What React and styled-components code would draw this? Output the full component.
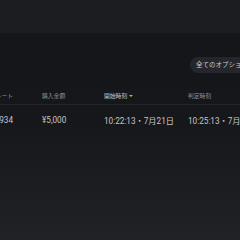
import styled, { createGlobalStyle } from "styled-components";

const GlobalStyle = createGlobalStyle`
  html, body {
    margin: 0;
    padding: 0;
    background: #141519;
  }
  body {
    font-family: Roboto, "Noto Sans CJK JP", sans-serif;
  }
`;

const Page = styled.div`
  width: 240px;
  height: 240px;
  overflow: hidden;
  display: flex;
  flex-direction: column;
  background: linear-gradient(180deg, #141519 0%, #16171b 50%, #202226 100%);
`;

const TopBar = styled.div`
  height: 33px;
  flex-shrink: 0;
  background: #1c1d21;
`;

const Toolbar = styled.div`
  display: flex;
  justify-content: flex-end;
  padding-top: 24px;
  height: 16px;
`;

const FilterPill = styled.div`
  flex-shrink: 0;
  width: 60px;
  margin-right: -16px;
  height: 16px;
  border-radius: 8px;
  background: #25262b;
  color: #c9cacf;
  font-size: 6.5px;
  line-height: 16px;
  padding-left: 6px;
  white-space: nowrap;
  overflow: hidden;
`;

const Table = styled.div`
  margin-top: 14px;
  margin-left: -20px;
  display: flex;
  flex-direction: column;
`;

const HeaderRow = styled.div`
  display: grid;
  grid-template-columns: 62px 62px 84px 100px;
  height: 16px;
  align-items: center;
  border-bottom: 1px solid #23252a;
  padding-bottom: 1px;
`;

const DataRow = styled.div`
  display: grid;
  grid-template-columns: 62px 62px 84px 100px;
  height: 29px;
  align-items: center;
`;

const HeadCell = styled.div`
  font-size: 5.8px;
  color: ${(p) => (p.$active ? "#c4c5ca" : "#8e9097")};
  white-space: nowrap;
  display: flex;
  align-items: center;
  gap: 2px;
`;

const Cell = styled.div`
  font-size: 8.2px;
  color: #c3c4c8;
  white-space: nowrap;
`;

const SortArrow = styled.span`
  width: 0;
  height: 0;
  border-left: 2px solid transparent;
  border-right: 2px solid transparent;
  border-top: 2.5px solid #e8a33c;
  margin-top: 1px;
`;

const Cut = styled.div`
  display: flex;
  justify-content: flex-end;
  padding-right: 29px;
`;

export default function App() {
  return (
    <>
      <GlobalStyle />
      <Page>
        <TopBar />
        <Toolbar>
          <FilterPill>全てのオプション</FilterPill>
        </Toolbar>
        <Table>
          <HeaderRow>
            <Cut>
              <HeadCell>レート</HeadCell>
            </Cut>
            <HeadCell>購入金額</HeadCell>
            <HeadCell $active>
              開始時刻
              <SortArrow />
            </HeadCell>
            <HeadCell>判定時刻</HeadCell>
          </HeaderRow>
          <DataRow>
            <Cut>
              <Cell>1.0934</Cell>
            </Cut>
            <Cell>¥5,000</Cell>
            <Cell>10:22:13・7月21日</Cell>
            <Cell>10:25:13・7月21日</Cell>
          </DataRow>
        </Table>
      </Page>
    </>
  );
}
